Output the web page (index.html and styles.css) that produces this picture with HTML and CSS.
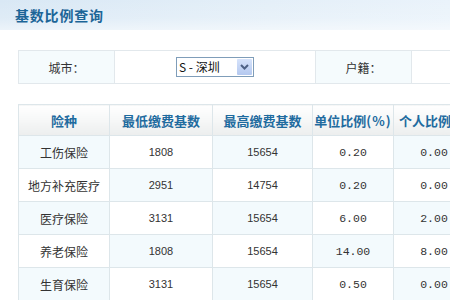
FILE: index.html
```html
<!DOCTYPE html>
<html lang="zh-CN">
<head>
<meta charset="utf-8">
<title>基数比例查询</title>
<link rel="stylesheet" href="styles.css">
</head>
<body>
<div class="titlebar"><h1 class="title">基数比例查询</h1></div>
<div class="content">
  <table class="filter">
    <colgroup><col class="fc1"><col class="fc2"><col class="fc3"><col class="fc4"></colgroup>
    <tr>
      <td class="label">城市<span class="colon">：</span></td>
      <td class="selcell">
        <span class="select"><span class="seltext">S - 深圳</span><span class="selbtn"><svg width="9" height="6" viewBox="0 0 9 6"><path d="M1 1 L4.5 4.5 L8 1" fill="none" stroke="#4d6185" stroke-width="2"/></svg></span></span>
      </td>
      <td class="label">户籍<span class="colon">：</span></td>
      <td></td>
    </tr>
  </table>
  <table class="data">
    <colgroup><col class="c1"><col class="c2"><col class="c3"><col class="c4"><col class="c5"></colgroup>
    <thead>
      <tr><th>险种</th><th>最低缴费基数</th><th>最高缴费基数</th><th>单位比例<span class="paren">(%)</span></th><th class="last">个人比例<span class="paren">(%)</span></th></tr>
    </thead>
    <tbody>
      <tr><td>工伤保险</td><td class="num">1808</td><td class="num">15654</td><td class="pct">0.20</td><td class="pct">0.00</td></tr>
      <tr><td>地方补充医疗</td><td class="num">2951</td><td class="num">14754</td><td class="pct">0.20</td><td class="pct">0.00</td></tr>
      <tr><td>医疗保险</td><td class="num">3131</td><td class="num">15654</td><td class="pct">6.00</td><td class="pct">2.00</td></tr>
      <tr><td>养老保险</td><td class="num">1808</td><td class="num">15654</td><td class="pct">14.00</td><td class="pct">8.00</td></tr>
      <tr><td>生育保险</td><td class="num">3131</td><td class="num">15654</td><td class="pct">0.50</td><td class="pct">0.00</td></tr>
    </tbody>
  </table>
</div>
</body>
</html>
```

FILE: styles.css
```css
html, body {
  margin: 0;
  padding: 0;
  overflow: hidden;
  background: #ffffff;
  font-family: "Noto Sans CJK SC", "Liberation Sans", sans-serif;
  color: #333333;
}
.titlebar {
  height: 30px;
  background: linear-gradient(to bottom, rgba(255,255,255,0) 0%, rgba(255,255,255,0.15) 60%, rgba(255,255,255,0.5) 100%),
              linear-gradient(to right, #d9e8f5 0%, #e4eff8 60%, #eaf3fb 100%);
  display: flex;
  align-items: center;
  padding-left: 15px;
}
.title {
  margin: 0;
  font-size: 14px;
  font-weight: bold;
  color: #1c6597;
  letter-spacing: 0.8px;
}
.content {
  padding: 20px 0 0 18px;
}
table {
  border-collapse: collapse;
  table-layout: fixed;
}
.filter {
  width: 520px;
}
.filter td {
  height: 32px;
  padding: 0;
  border: 1px solid #e2e8ec;
  font-size: 12px;
  text-align: center;
}
.colon {
  font-family: "Noto Sans CJK TC", sans-serif;
}
.fc1 { width: 96px; }
.fc2 { width: 201px; }
.fc3 { width: 96px; }
.fc4 { width: 127px; }
.filter .label {
  background: #f5fbfd;
}
.select {
  display: inline-flex;
  align-items: center;
  width: 76px;
  height: 18px;
  border: 1px solid #7f9db9;
  background: #fff;
  vertical-align: middle;
  justify-content: space-between;
}
.seltext {
  font-size: 12px;
  padding-left: 2px;
  color: #111;
  line-height: 18px;
}
.selbtn {
  width: 15px;
  height: 16px;
  margin-right: 1px;
  background: linear-gradient(to bottom, #d6e3fb, #b4c8ef);
  border-radius: 1px;
  display: flex;
  align-items: center;
  justify-content: center;
}
.data {
  margin-top: 20px;
  width: 456px;
}
.c1 { width: 91px; }
.c2 { width: 103px; }
.c3 { width: 100px; }
.c4 { width: 81px; }
.c5 { width: 81px; }
.data th, .data td {
  border: 1px solid #dde6ea;
  padding: 0;
  text-align: center;
  white-space: nowrap;
  overflow: hidden;
}
.data th {
  height: 30px;
  font-size: 13px;
  font-weight: bold;
  color: #1f6b9f;
  background: linear-gradient(to bottom, #ffffff 0%, #f6f7f7 50%, #eceeee 100%);
}
.data th.last {
  text-align: left;
  padding-left: 5px;
}
.paren {
  letter-spacing: 1px;
}
.data td {
  height: 32px;
  font-size: 12px;
  color: #333;
}
.data tbody tr:nth-child(odd) td:nth-child(odd),
.data tbody tr:nth-child(even) td:nth-child(even) {
  background: #f3fafd;
}
.data td.num {
  font-family: "Liberation Sans", sans-serif;
  font-size: 11px;
}
.data td.pct {
  font-family: "Liberation Mono", monospace;
  font-size: 11.5px;
}
```
